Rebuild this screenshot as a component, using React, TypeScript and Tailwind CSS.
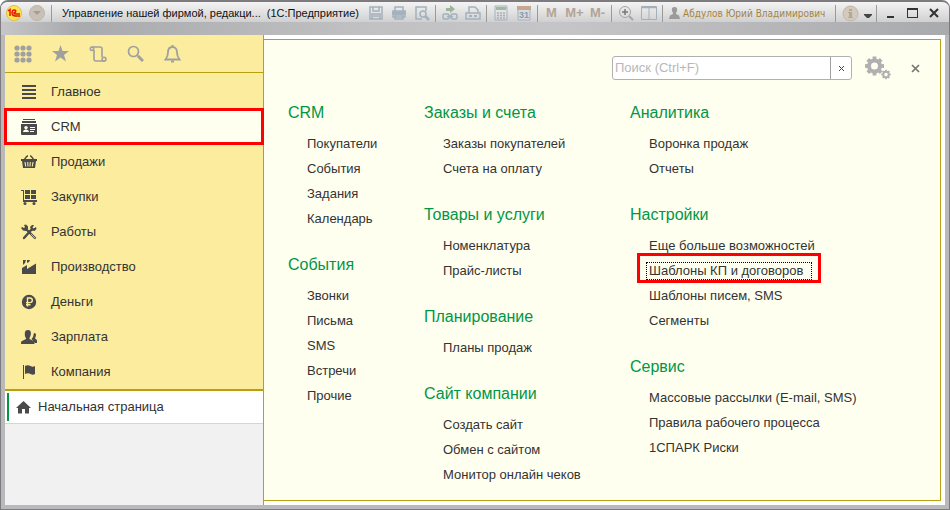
import type { ReactNode } from "react";

type MenuGroup = { title: string; items: string[] };

const columns: MenuGroup[][] = [
  [
    { title: "CRM", items: ["Покупатели", "События", "Задания", "Календарь"] },
    { title: "События", items: ["Звонки", "Письма", "SMS", "Встречи", "Прочие"] },
  ],
  [
    { title: "Заказы и счета", items: ["Заказы покупателей", "Счета на оплату"] },
    { title: "Товары и услуги", items: ["Номенклатура", "Прайс-листы"] },
    { title: "Планирование", items: ["Планы продаж"] },
    { title: "Сайт компании", items: ["Создать сайт", "Обмен с сайтом", "Монитор онлайн чеков"] },
  ],
  [
    { title: "Аналитика", items: ["Воронка продаж", "Отчеты"] },
    {
      title: "Настройки",
      items: ["Еще больше возможностей", "Шаблоны КП и договоров", "Шаблоны писем, SMS", "Сегменты"],
    },
    {
      title: "Сервис",
      items: ["Массовые рассылки (E-mail, SMS)", "Правила рабочего процесса", "1СПАРК Риски"],
    },
  ],
];

const focusedItem = "Шаблоны КП и договоров";

const Glyph = ({ children }: { children: ReactNode }) => (
  <svg width="16" height="16" viewBox="0 0 16 16" fill="#4a4a4a" aria-hidden="true" className="shrink-0">
    {children}
  </svg>
);

const sections: { label: string; icon: ReactNode }[] = [
  {
    label: "Главное",
    icon: <path d="M1 1h14v2H1zM1 5h14v2H1zM1 9h14v2H1zM1 13h14v2H1z" />,
  },
  {
    label: "CRM",
    icon: (
      <>
        <path d="M2 0h12v1H2zM1 2h14v2H1z" />
        <path d="M0 5h16v10a1 1 0 0 1-1 1H1a1 1 0 0 1-1-1z" />
        <circle cx="5" cy="8.6" r="1.7" fill="#fffff0" />
        <path d="M2 13c0-2 1.5-2 3-2.8 1.5.8 3 .8 3 2.8zM9 8h5v1H9zM9 10h5v1H9zM9 12h4v1H9z" fill="#fffff0" />
      </>
    ),
  },
  {
    label: "Продажи",
    icon: (
      <>
        <path d="M3 6 6 2M13 6l-3-4M6 2h1M9 2h1" stroke="#4a4a4a" strokeWidth="1.3" />
        <path d="M0 5h16v2h-1l-1 7H2L1 7H0z" />
        <path d="m4 8 .7 4.500M6.700 8l.3 4.500M9.300 8 9 12.500M12 8l-.7 4.500" stroke="#fbec9e" strokeWidth="1.1" />
      </>
    ),
  },
  {
    label: "Закупки",
    icon: (
      <>
        <path d="M0 1h3v10h13v2H2V2H0z" />
        <path d="M4 1h5v4H4zM10 1h5v4h-5zM4 6h5v4H4zM10 6h5v4h-5z" />
        <circle cx="4" cy="14.5" r="1.5" />
        <circle cx="13" cy="14.5" r="1.5" />
      </>
    ),
  },
  {
    label: "Работы",
    icon: (
      <>
        <path d="m5 5 9 9M11 5l-8 9" stroke="#4a4a4a" strokeWidth="2.4" strokeLinecap="round" />
        <path d="M0 4 1 3l2 1 1-1-1-2 2-.5 2 2v2L5 7 2 6.5zM9 3l2-2h2l-1.5 2.500 1 1L15 3l.5 2-2 2-3-.5z" />
        <path d="m10 10 4.500 4.500" stroke="#fbec9e" strokeWidth=".7" />
      </>
    ),
  },
  {
    label: "Производство",
    icon: <path d="M1 15V9l5-3v4l9-5.500V15zM2 1h3L4 4 2 6zM6 1h3L8 3 6 4z" />,
  },
  {
    label: "Деньги",
    icon: (
      <>
        <circle cx="8" cy="8" r="7.2" />
        <path d="M6.500 12.500V4H9a2.300 2.300 0 0 1 0 4.600H5M5 10.700h4.500" fill="none" stroke="#fbec9e" strokeWidth="1.4" />
      </>
    ),
  },
  {
    label: "Зарплата",
    icon: (
      <>
        <path d="M13 4c2 0 2.500 2 1.500 4l-.5 1.500 2 1.500v3h-2l-3.500-4L12 8z" />
        <path d="M7 1c2.500 0 3.300 2 2.800 4.500C9.500 7 9 8 8.500 9v1l4 2c.8.4 1 1 1 3H0c0-2 .2-2.600 1-3l4-2V9C4 8 3.800 6.500 3.800 4.500 3.800 2 5 1 7 1z" />
      </>
    ),
  },
  {
    label: "Компания",
    icon: <path d="M2 1h1v14H2zM4 2c2-1.300 4-1 5.500 0S12.500 3 14 2v8c-1.500 1-3 1-4.500 0S6 9 4 10z" />,
  },
];

const ToolButton = ({ label, children }: { label: string; children: ReactNode }) => (
  <button
    type="button"
    aria-label={label}
    className="flex h-6 w-[23px] items-center justify-center text-[13px] font-bold text-[#b3a497]"
  >
    {children}
  </button>
);

const ToolIcon = ({ children }: { children: ReactNode }) => (
  <svg width="16" height="16" viewBox="0 0 16 16" fill="none" stroke="#a3b1bd" strokeWidth="1.5" aria-hidden="true">
    {children}
  </svg>
);

const Separator = () => <span className="mx-0.5 h-[17px] w-px shrink-0 bg-[#9a9a9a]" />;

const TitleBar = () => (
  <header className="flex h-[33px] shrink-0 items-start bg-[linear-gradient(to_bottom,#f4f4f4_0px,#e2e2e2_10px,#d0d0d2_20px,transparent_20px),linear-gradient(to_right,#c6c6c8,#a9aaad_8%,#c2c2c4_40%,#c5c5c7_60%,#a9aaad)] pr-1">
    <div className="flex h-[22px] min-w-0 flex-1 items-center pl-[5px]">
      <svg width="16" height="16" viewBox="0 0 16 16" role="img" aria-label="1С" className="shrink-0">
        <circle cx="8" cy="8" r="7.5" fill="#ffe44d" stroke="#e0bd4a" />
        <path d="m2 6 2-1.500V11M10 6.500C9.500 4 6 4.500 6 7.500S8 11 9.500 11H14M10 7.500c-2-1-3 1-1 1.500h5" fill="none" stroke="#e3170a" strokeWidth="1.5" />
      </svg>
      <button type="button" aria-label="Главное меню" className="ml-[7px] shrink-0">
        <svg width="16" height="16" viewBox="0 0 16 16">
          <circle cx="8" cy="8" r="7.5" fill="#c9c1b7" stroke="#bdb5ab" />
          <path d="M4 6h8l-4 4z" fill="#a69d92" />
        </svg>
      </button>
      <span className="mr-2.5 ml-1.5 h-[17px] w-px shrink-0 bg-[#9a9a9a]" />
      <h1 className="flex min-w-0 gap-1.5 text-[11px] whitespace-nowrap text-[#111]">
        <span>Управление нашей фирмой, редакци...</span>
        <span>(1С:Предприятие)</span>
      </h1>
    </div>

    <div className="flex h-[22px] shrink-0 items-center">
      <ToolButton label="Сохранить">
        <ToolIcon>
          <path d="M2 2h12v12H2zM5 2v4h6V2M4 14V9h8v5M5 11h6" />
        </ToolIcon>
      </ToolButton>
      <ToolButton label="Печать">
        <ToolIcon>
          <path d="M4 6V2h8v4M2 6h12v6H2zM4 10h8v4H4z" />
          <path d="M2 7h12v2H2z" fill="#a3b1bd" />
        </ToolIcon>
      </ToolButton>
      <ToolButton label="Предварительный просмотр">
        <ToolIcon>
          <path d="M12 6V2H2v12h6" />
          <circle cx="9" cy="9" r="3" />
          <path d="m11 11 4 4" strokeWidth="2.5" />
        </ToolIcon>
      </ToolButton>
      <Separator />
      <ToolButton label="Получить ссылку">
        <ToolIcon>
          <rect x="1" y="9" width="6" height="5" rx="1.5" />
          <rect x="9" y="9" width="6" height="5" rx="1.5" />
          <path d="M5 11.500h6" />
          <path d="M4 3h4V0l5 4-5 4V6H4z" fill="#9db39b" stroke="none" />
        </ToolIcon>
      </ToolButton>
      <ToolButton label="Перейти по ссылке">
        <ToolIcon>
          <path d="M4 8V2h6l3 3v3M1 8h14v6H1z" />
          <path d="M4 11h3M9 11h3" strokeWidth="2" />
        </ToolIcon>
      </ToolButton>
      <Separator />
      <ToolButton label="Калькулятор">
        <ToolIcon>
          <path d="M2 1h12v14H2z" strokeWidth="1" />
          <path d="M3 2h10v3H3z" fill="#9dbb9b" stroke="none" />
          <path d="M4 8h8M4 10.500h8M4 13h8" strokeDasharray="2 1" />
        </ToolIcon>
      </ToolButton>
      <ToolButton label="Календарь">
        <svg width="16" height="16" viewBox="0 0 16 16" aria-hidden="true">
          <path d="M2 2h12v13H2z" fill="#d5dbe0" stroke="#a3b1bd" />
          <path d="M1 1h14v4H1z" fill="#c5a792" />
          <text x="8" y="13" textAnchor="middle" fontSize="9" fill="#8c9aa8">31</text>
        </svg>
      </ToolButton>
      <Separator />
      <ToolButton label="Записать в память">M</ToolButton>
      <ToolButton label="Добавить к памяти">M+</ToolButton>
      <ToolButton label="Вычесть из памяти">M-</ToolButton>
      <Separator />
      <ToolButton label="Масштаб">
        <svg width="16" height="16" viewBox="0 0 16 16" fill="none" aria-hidden="true">
          <circle cx="7" cy="7" r="5.5" stroke="#a5a5a5" />
          <path d="M4 7h6M7 4v6" stroke="#777" strokeWidth="1.5" />
          <path d="m11 11 4 4" stroke="#a5a5a5" strokeWidth="2" />
        </svg>
      </ToolButton>
      <ToolButton label="Панели">
        <ToolIcon>
          <path d="M.5 1.500h15v13H.5zM8 3v11" strokeWidth="1" />
          <path d="M1 2.500h14" />
        </ToolIcon>
      </ToolButton>
      <Separator />
      <a
        href="#user"
        className="flex w-[168px] items-center gap-[3px] pl-1 font-['DejaVu_Sans_Condensed','Liberation_Sans',sans-serif] text-[10px] whitespace-nowrap text-[#a38443]"
      >
        <svg width="11" height="12" viewBox="0 0 11 12" fill="#9b9b9b" aria-hidden="true" className="shrink-0">
          <path d="M5.500 0C8 0 8.500 2 8 4L7 6v1l3 1.500 1 3.500H0l1-3.500L4 7V6L3 4C2.500 2 3 0 5.500 0z" />
        </svg>
        Абдулов Юрий Владимирович
      </a>
      <Separator />
      <button type="button" aria-label="О программе" className="flex w-6 justify-center">
        <svg width="17" height="17" viewBox="0 0 17 17" aria-hidden="true">
          <circle cx="8.5" cy="8.5" r="7.5" fill="#d3cabd" stroke="#c2b6a5" />
          <path d="M7 4h3v2H7zM6 7h4v5h1v1H6v-1h1V8H6z" fill="#b3a893" />
        </svg>
      </button>
      <button type="button" aria-label="Еще" className="flex w-3 justify-center pt-1.5">
        <svg width="8" height="5" viewBox="0 0 8 5" fill="#444">
          <path d="M0 0h8v1L5 4H3L0 1z" />
        </svg>
      </button>
      <Separator />
      <button type="button" aria-label="Свернуть" className="flex w-[22px] justify-center pt-2">
        <span className="h-0.5 w-[7px] bg-[#333]" />
      </button>
      <button type="button" aria-label="Развернуть" className="flex w-[22px] justify-center">
        <span className="h-2.5 w-[11px] border border-t-2 border-[#333]" />
      </button>
      <button type="button" aria-label="Закрыть" className="flex w-[22px] justify-center">
        <svg width="10" height="10" viewBox="0 0 10 10" stroke="#333" strokeWidth="2">
          <path d="m1 1 8 8M9 1 1 9" />
        </svg>
      </button>
    </div>
  </header>
);

const Sidebar = () => (
  <aside className="relative z-10 flex w-[259px] shrink-0 flex-col border-r border-[#b8a010] bg-[#f1f1f1] text-[#333]">
    <div className="flex h-[38px] shrink-0 items-center gap-5 border-b border-[#b8a010] bg-[#fbec9e] pl-[9px] text-[#a0a0a0]">
      <button type="button" aria-label="Разделы">
        <svg width="18" height="18" viewBox="0 0 18 18" fill="currentColor">
          {[3, 9, 15].map((y) => [3, 9, 15].map((x) => <circle key={`${x}-${y}`} cx={x} cy={y} r="2.6" />))}
        </svg>
      </button>
      <button type="button" aria-label="Избранное">
        <svg width="17" height="17" viewBox="0 0 17 17" fill="currentColor">
          <path d="m8.500 0 2 6H17l-5 4 2 6.500-5.500-4-5.500 4L5 10 0 6h6.500z" />
        </svg>
      </button>
      <button type="button" aria-label="История">
        <svg width="18" height="18" viewBox="0 0 18 18" fill="none" stroke="currentColor" strokeWidth="1.6">
          <path d="M3 2h8q2 0 2 2v8M5 5v9q0 2 2 2h8" />
          <circle cx="3" cy="3.7" r="1.7" />
          <circle cx="15" cy="14.2" r="1.9" />
        </svg>
      </button>
      <button type="button" aria-label="Поиск">
        <svg width="17" height="17" viewBox="0 0 17 17" fill="none" stroke="currentColor">
          <circle cx="6.5" cy="6.5" r="5" strokeWidth="1.7" />
          <path d="m10 10 2 2" strokeWidth="1.5" />
          <path d="m11 11 5 5" strokeWidth="3" />
        </svg>
      </button>
      <button type="button" aria-label="Уведомления">
        <svg width="17" height="18" viewBox="0 0 17 18" fill="none" stroke="currentColor" strokeWidth="1.8">
          <path d="M8.500 2C5.500 2 4 4.500 4 7.500c0 3.500-.5 4.500-2.500 7h14c-2-2.500-2.500-3.500-2.500-7C13 4.500 11.500 2 8.500 2z" />
          <path d="M8.500 0v2M7 16.500h3" strokeWidth="2" />
        </svg>
      </button>
    </div>

    <nav className="border-b-2 border-[#b8a010] bg-[#fbec9e] pt-px text-[13px]">
      {sections.map(({ label, icon }) => (
        <a
          key={label}
          href="#section"
          aria-current={label === "CRM" ? "page" : undefined}
          className={
            label === "CRM"
              ? "flex h-[35px] items-center gap-3.5 bg-[#fffff0] pl-4 outline-3 -outline-offset-2 outline-[#f00]"
              : "flex h-[35px] items-center gap-3.5 pl-4"
          }
        >
          <Glyph>{icon}</Glyph>
          {label}
        </a>
      ))}
    </nav>

    <a href="#home" className="flex h-[33px] shrink-0 items-center border-b border-[#d5d5d5] bg-white pl-0.5 text-[13px]">
      <span className="mr-[7px] h-7 w-0.5 bg-[#009646]" />
      <svg width="15" height="13" viewBox="0 0 15 13" fill="#4a4a4a" aria-hidden="true" className="mr-[7px]">
        <path d="M7.500 0 15 7h-2v5.500H9V8H6v4.500H2V7H0z" />
      </svg>
      Начальная страница
    </a>
  </aside>
);

const Group = ({ title, items }: MenuGroup) => (
  <section>
    <h2 className="mb-1.5 text-base leading-6 text-[#009646]">{title}</h2>
    <ul className="pl-[19px] text-[13px] leading-[25px] whitespace-nowrap text-[#333]">
      {items.map((item) => (
        <li key={item}>
          {item === focusedItem ? (
            <a href="#item" className="relative -mx-[3px] border border-dotted border-black pr-2 pb-px pl-0.5">
              {item}
              <span className="absolute -inset-x-2.5 -top-2.5 -bottom-1 border-3 border-[#f00]" />
            </a>
          ) : (
            <a href="#item">{item}</a>
          )}
        </li>
      ))}
    </ul>
  </section>
);

const gearTeeth = [0, 45, 90, 135, 180, 225, 270, 315];

const Gear = ({ x, y, r }: { x: number; y: number; r: number }) => (
  <g transform={`translate(${x} ${y})`}>
    <circle r={r * 0.58} fill="none" stroke="#b0b0b0" strokeWidth={r * 0.42} />
    {gearTeeth.map((angle) => (
      <rect key={angle} x={-r * 0.2} y={-r} width={r * 0.4} height={r * 0.35} fill="#b0b0b0" transform={`rotate(${angle})`} />
    ))}
  </g>
);

const FunctionsPanel = () => (
  <main className="min-w-0 flex-1 bg-white pt-1 pr-1 pb-1">
    <div className="h-full border-y border-r border-[#b8a010] bg-[#fffff0]">
      <div className="flex items-center justify-end pt-4 pr-[18px]">
        <div className="flex h-6 w-60 rounded-[3px] border border-[#b0b0b0] bg-white">
          <input
            type="text"
            aria-label="Поиск"
            placeholder="Поиск (Ctrl+F)"
            className="min-w-0 flex-1 pl-0.5 text-[13px] outline-none placeholder:text-[#b8b8b8]"
          />
          <button type="button" aria-label="Очистить" className="flex w-[21px] items-center justify-center border-l border-[#a0a0a0]">
            <svg width="5" height="5" viewBox="0 0 5 5" stroke="#444">
              <path d="m0 0 5 5M5 0 0 5" />
            </svg>
          </button>
        </div>
        <button type="button" aria-label="Настройка" className="ml-[13px]">
          <svg width="26" height="24" viewBox="0 0 26 24">
            <Gear x={9.5} y={10} r={9.5} />
            <Gear x={21} y={18.5} r={4.7} />
          </svg>
        </button>
        <button type="button" aria-label="Закрыть панель" className="ml-[18px] p-0.5">
          <svg width="9" height="9" viewBox="0 0 9 9" stroke="#77776f" strokeWidth="1.7">
            <path d="m1 1 7 7M8 1 1 8" />
          </svg>
        </button>
      </div>
      <div className="mt-[21px] grid grid-cols-[136px_206px_1fr] pl-6">
        {columns.map((groups) => (
          <div key={groups[0].title} className="flex flex-col gap-[22px]">
            {groups.map((group) => (
              <Group key={group.title} {...group} />
            ))}
          </div>
        ))}
      </div>
    </div>
  </main>
);

const App = () => (
  <div className="flex h-screen flex-col overflow-hidden rounded-t-lg border border-t-2 border-[#7d7b7d] bg-[#b9b9bb] font-['Liberation_Sans',Arial,sans-serif]">
    <TitleBar />
    <div className="mr-1 mb-1 ml-1 flex min-h-0 flex-1">
      <Sidebar />
      <FunctionsPanel />
    </div>
  </div>
);

export default App;
